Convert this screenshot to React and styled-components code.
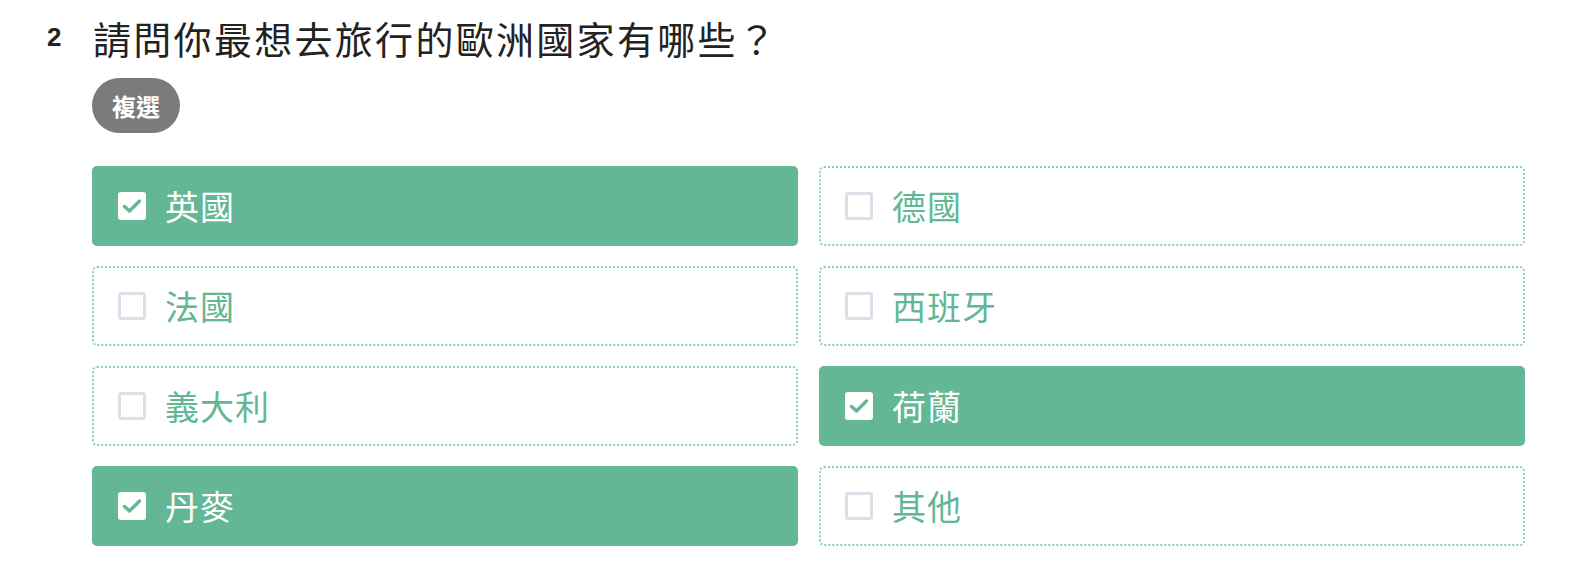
import React, { useState } from "react";
import styled, { createGlobalStyle } from "styled-components";

const Global = createGlobalStyle`
  html, body { margin: 0; padding: 0; background: #fff; overflow: hidden; }
  body { font-family: "Liberation Sans", "Noto Sans CJK TC", sans-serif; }
`;

const Page = styled.div`
  padding: 14px 47px 0 47px;
`;

const Header = styled.div`
  display: flex;
  align-items: center;
  gap: 29px;
  height: 46px;
`;

const Number = styled.span`
  font-family: "Liberation Sans", sans-serif;
  font-weight: bold;
  font-size: 26px;
  color: #222;
  width: 17px;
`;

const Title = styled.h2`
  margin: 0;
  font-family: "Noto Sans CJK TC", sans-serif;
  font-weight: 400;
  font-size: 38px;
  letter-spacing: 2.3px;
  color: #222;
`;

const Body = styled.div`
  padding-left: 45px;
`;

const Badge = styled.span`
  display: inline-flex;
  align-items: center;
  justify-content: center;
  margin-top: 18px;
  width: 88px;
  height: 55px;
  border-radius: 28px;
  background: #7b7b7b;
  color: #fff;
  font-family: "Noto Sans CJK TC", sans-serif;
  font-weight: 700;
  font-size: 24px;
`;

const Grid = styled.div`
  margin-top: 33px;
  display: grid;
  grid-template-columns: 1fr 1fr;
  column-gap: 21px;
  row-gap: 20px;
`;

const Option = styled.label`
  display: flex;
  align-items: center;
  gap: 19px;
  height: 80px;
  box-sizing: border-box;
  padding-left: 24px;
  border-radius: 5px;
  cursor: pointer;
  background: ${(p) => (p.$checked ? "#63b794" : "#fff")};
  border: 2px ${(p) => (p.$checked ? "solid #63b794" : "dotted #8dd1b6")};
  color: ${(p) => (p.$checked ? "#fff" : "#63b794")};
`;

const Box = styled.span`
  width: 28px;
  height: 28px;
  box-sizing: border-box;
  border-radius: 3px;
  background: #fff;
  border: ${(p) => (p.$checked ? "none" : "3px solid #dcdfe8")};
  display: flex;
  align-items: center;
  justify-content: center;
  flex-shrink: 0;
`;

const Label = styled.span`
  font-family: "Noto Sans CJK TC", sans-serif;
  font-size: 34px;
  font-weight: 400;
  letter-spacing: 1px;
  line-height: 1;
`;

const options = [
  ["英國", true],
  ["德國", false],
  ["法國", false],
  ["西班牙", false],
  ["義大利", false],
  ["荷蘭", true],
  ["丹麥", true],
  ["其他", false],
];

export default function App() {
  const [state, setState] = useState(options.map((o) => o[1]));
  return (
    <Page>
      <Global />
      <Header>
        <Number>2</Number>
        <Title>請問你最想去旅行的歐洲國家有哪些？</Title>
      </Header>
      <Body>
        <Badge>複選</Badge>
        <Grid>
          {options.map(([name], i) => (
            <Option
              key={name}
              $checked={state[i]}
              onClick={() => setState((s) => s.map((v, j) => (j === i ? !v : v)))}
            >
              <Box $checked={state[i]}>
                {state[i] && (
                  <svg width="20" height="16" viewBox="0 0 20 16">
                    <path d="M2.5 8.5 L7.5 13 L17.5 3" fill="none" stroke="#63b794" strokeWidth="3.4" strokeLinecap="round" strokeLinejoin="round" />
                  </svg>
                )}
              </Box>
              <Label>{name}</Label>
            </Option>
          ))}
        </Grid>
      </Body>
    </Page>
  );
}
